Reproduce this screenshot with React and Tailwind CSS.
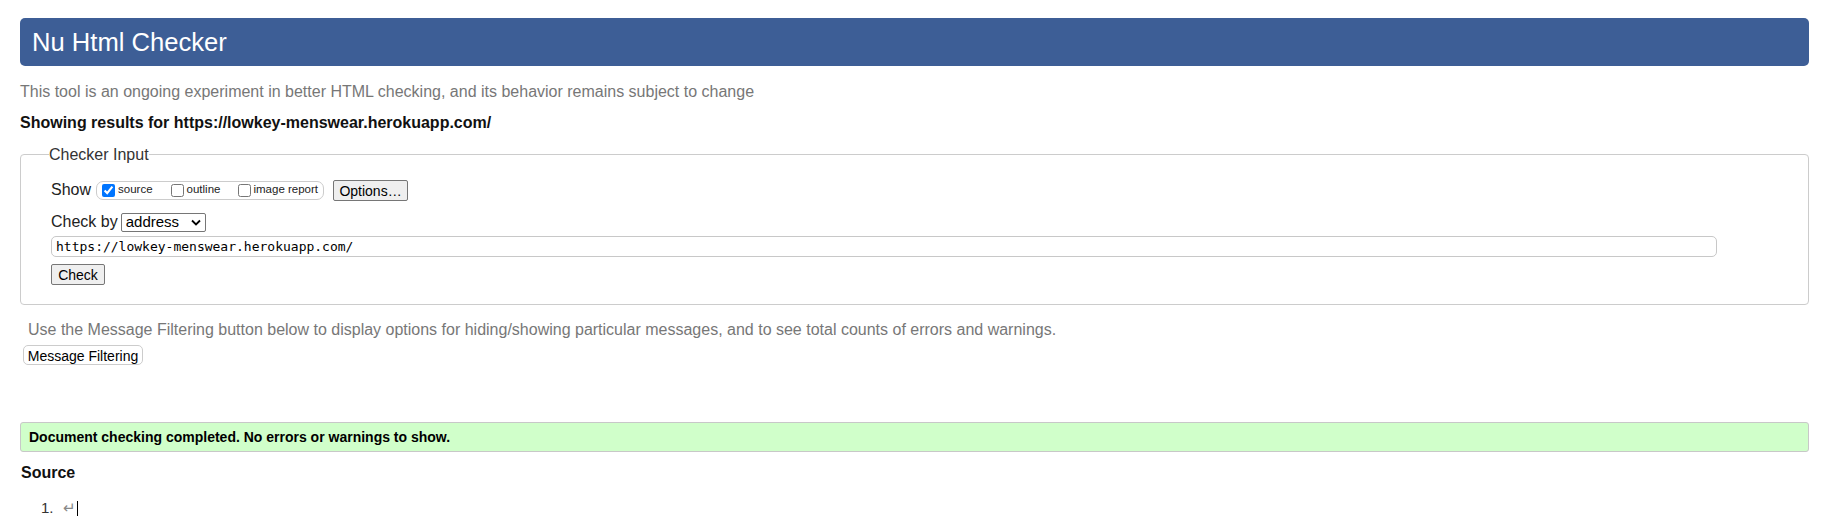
import React from 'react';

const Chevron = () => (
    <svg width="10" height="7" viewBox="0 0 10 7" className="ml-auto mr-[4px]">
        <path d="M1 1.5 L5 5.5 L9 1.5" fill="none" stroke="#000" strokeWidth="1.8" />
    </svg>
);

const App = () => {
    return (
        <div className="min-h-[516px] bg-white pl-[20px] pr-[29px] text-[#222] font-['Liberation_Sans',Arial,sans-serif]">
            {/* Title bar */}
            <h1 className="mt-[18px] h-[48px] flex items-center rounded-[5px] bg-[#3d5e96] pl-[12px] text-[25.6px] font-normal text-white">
                Nu Html Checker
            </h1>

            <p className="mt-[16px] leading-[20px] text-[16px] text-[#777]">
                This tool is an ongoing experiment in better HTML checking, and its behavior remains subject to change
            </p>
            <p className="mt-[11px] leading-[20px] text-[16px] font-bold text-[#111]">
                Showing results for https://lowkey-menswear.herokuapp.com/
            </p>

            {/* Checker input */}
            <fieldset className="mt-[13px] rounded-[4px] border border-[#ccc] pl-[30px] pr-[10px] pb-[19px]">
                <legend className="-ml-[2px] text-[16px] leading-[17px] text-[#333]">Checker Input</legend>

                <div className="mt-[16px] flex items-center h-[22px]">
                    <span className="text-[16px]">Show</span>
                    <div className="ml-[5px] flex items-center h-[19px] rounded-[7px] border border-[#ccc] pl-[5px] pr-[5px] text-[11.5px]">
                        <input type="checkbox" defaultChecked className="m-0 h-[13px] w-[13px] accent-[#0075ff]" />
                        <span className="ml-[3px]">source</span>
                        <input type="checkbox" className="m-0 ml-[18px] h-[13px] w-[13px]" />
                        <span className="ml-[3px]">outline</span>
                        <input type="checkbox" className="m-0 ml-[18px] h-[13px] w-[13px]" />
                        <span className="ml-[2px]">image report</span>
                    </div>
                    <button className="ml-[9px] h-[21px] w-[75px] rounded-[2px] border border-[#767676] bg-[#efefef] text-[14px] text-black">
                        Options…
                    </button>
                </div>

                <div className="mt-[11px] flex items-center h-[20px]">
                    <span className="text-[16px]">Check by</span>
                    <div className="ml-[3px] flex items-center h-[19px] w-[85px] rounded-[2px] border border-[#767676] pl-[4px] text-[15px] text-black">
                        address
                        <Chevron />
                    </div>
                </div>

                <div className="mt-[4px] flex items-center h-[21px] w-[1666px] rounded-[5px] border border-[#c8c8c8] pl-[4px] font-['DejaVu_Sans_Mono',monospace] text-[13px] text-black">
                    https://lowkey-menswear.herokuapp.com/
                </div>

                <button className="mt-[7px] block h-[21px] w-[54px] rounded-[2px] border border-[#767676] bg-[#efefef] text-[14px] text-black">
                    Check
                </button>
            </fieldset>

            <p className="mt-[15px] ml-[8px] leading-[20px] text-[16px] text-[#777]">
                Use the Message Filtering button below to display options for hiding/showing particular messages, and to see total counts of errors and warnings.
            </p>
            <button className="mt-[5px] ml-[3px] block h-[20px] w-[120px] rounded-[5px] border border-[#ccc] bg-white text-[14px] text-black">
                Message Filtering
            </button>

            {/* Result */}
            <div className="mt-[57px] flex items-center h-[30px] rounded-[3px] border border-[#c8c8c8] bg-[#d0ffca] pl-[8px] text-[14px] font-bold text-black">
                Document checking completed. No errors or warnings to show.
            </div>

            <h2 className="mt-[11px] ml-[1px] leading-[20px] text-[16px] font-bold text-[#111]">Source</h2>
            <ol className="mt-[15px] pl-[21px] text-[15px] leading-[20px]">
                <li className="flex items-center">
                    <span className="text-[#333]">1.</span>
                    <span className="ml-[9px] text-[#888]">↵</span>
                    <span className="ml-[1px] inline-block h-[15px] w-[1px] bg-black" />
                </li>
            </ol>
        </div>
    );
};

export default App;
